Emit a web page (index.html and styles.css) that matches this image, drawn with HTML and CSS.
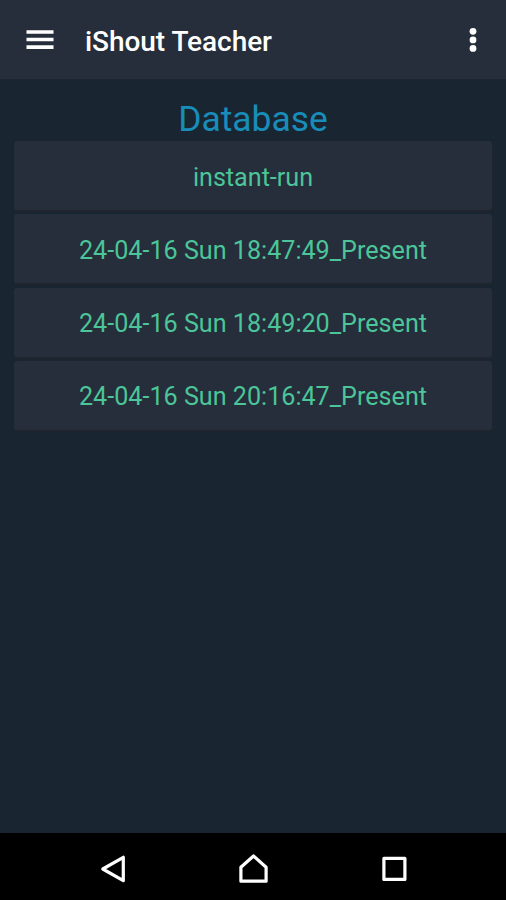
FILE: index.html
```html
<!DOCTYPE html>
<html lang="en">
<head>
    <meta charset="utf-8">
    <title>iShout Teacher</title>
    <link rel="stylesheet" href="styles.css">
</head>
<body>
    <header class="header">
        <svg class="menu-icon" width="28" height="20" viewBox="0 0 28 20">
            <path d="M0.5 0.2h27v3.6h-27zM0.5 7.7h27v3.6h-27zM0.5 15.3h27v3.6h-27z"/>
        </svg>
        <h1 class="title">iShout Teacher</h1>
        <svg class="more-icon" width="8" height="26" viewBox="0 0 8 26">
            <circle cx="4" cy="4.3" r="3.4"/>
            <circle cx="4" cy="12.9" r="3.4"/>
            <circle cx="4" cy="21.4" r="3.4"/>
        </svg>
    </header>

    <main class="content">
        <h2 class="heading">Database</h2>
        <div class="list">
            <button class="item">instant-run</button>
            <button class="item">24-04-16 Sun 18:47:49_Present</button>
            <button class="item">24-04-16 Sun 18:49:20_Present</button>
            <button class="item">24-04-16 Sun 20:16:47_Present</button>
        </div>
    </main>

    <!-- Android navigation bar -->
    <nav class="navbar">
        <svg width="30" height="32" viewBox="0 0 30 32">
            <path d="M26.3 4.3v23.4L5.8 16z"/>
        </svg>
        <svg width="30" height="32" viewBox="0 0 30 32">
            <path d="M2.9 28.2V14.2L15.5 3l12.6 11.2v14z"/>
        </svg>
        <svg width="30" height="32" viewBox="0 0 30 32">
            <rect x="4.9" y="5.4" width="21" height="21"/>
        </svg>
    </nav>
</body>
</html>
```

FILE: styles.css
```css
* {
    box-sizing: border-box;
}

body {
    margin: 0;
    height: 900px;
    display: flex;
    flex-direction: column;
    overflow: hidden;
    background-color: #192531;
    font-family: Roboto, sans-serif;
}

.header {
    display: flex;
    align-items: center;
    height: 80px;
    padding: 0 29px 0 26px;
    background-color: #252e3a;
    border-bottom: 1px solid #1c2631;
    color: #fff;
}

.menu-icon,
.more-icon {
    fill: #fff;
}

.title {
    flex: 1;
    margin: 4px 0 0 31px;
    font-size: 28px;
    font-weight: 500;
    line-height: 34px;
    letter-spacing: -0.05px;
}

.content {
    flex: 1;
    padding: 17px 14px 0;
}

.heading {
    margin: 0;
    color: #188db9;
    font-size: 35.4px;
    font-weight: 400;
    line-height: 44px;
    text-align: center;
}

.list {
    display: flex;
    flex-direction: column;
    gap: 4.3px;
}

.item {
    height: 69px;
    padding: 3px 0 0;
    border: none;
    border-radius: 3px;
    background-color: #252e3a;
    box-shadow: 0 1px 2px #26282b;
    color: #4bc599;
    font-family: inherit;
    font-size: 25.15px;
}

.navbar {
    display: flex;
    justify-content: center;
    gap: 111px;
    height: 67px;
    padding-top: 20px;
    background-color: #000;
}

.navbar svg {
    fill: none;
    stroke: #fff;
    stroke-width: 3.2;
    stroke-linejoin: round;
}
```
